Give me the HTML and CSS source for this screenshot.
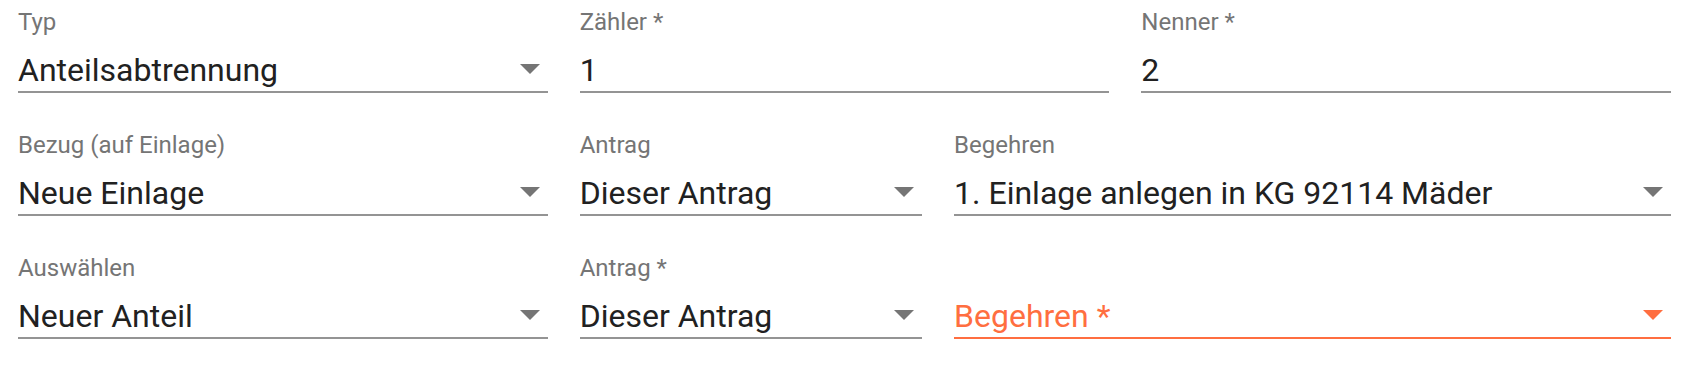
FILE: index.html
```html
<!DOCTYPE html>
<html lang="de">
<head>
<meta charset="utf-8">
<title>Formular</title>
<link rel="stylesheet" href="styles.css">
</head>
<body>
<form class="form">
  <div class="row row-even">
    <div class="field">
      <div class="label">Typ</div>
      <div class="control">
        <span class="value">Anteilsabtrennung</span>
        <svg class="arrow" viewBox="0 0 20 10"><polygon points="0,0 20,0 10,10"/></svg>
      </div>
    </div>
    <div class="field">
      <div class="label">Zähler *</div>
      <div class="control">
        <span class="value">1</span>
      </div>
    </div>
    <div class="field">
      <div class="label">Nenner *</div>
      <div class="control">
        <span class="value">2</span>
      </div>
    </div>
  </div>

  <div class="row row-split">
    <div class="field">
      <div class="label">Bezug (auf Einlage)</div>
      <div class="control">
        <span class="value">Neue Einlage</span>
        <svg class="arrow" viewBox="0 0 20 10"><polygon points="0,0 20,0 10,10"/></svg>
      </div>
    </div>
    <div class="field">
      <div class="label">Antrag</div>
      <div class="control">
        <span class="value">Dieser Antrag</span>
        <svg class="arrow" viewBox="0 0 20 10"><polygon points="0,0 20,0 10,10"/></svg>
      </div>
    </div>
    <div class="field">
      <div class="label">Begehren</div>
      <div class="control">
        <span class="value">1. Einlage anlegen in KG 92114 Mäder</span>
        <svg class="arrow" viewBox="0 0 20 10"><polygon points="0,0 20,0 10,10"/></svg>
      </div>
    </div>
  </div>

  <div class="row row-split">
    <div class="field">
      <div class="label">Auswählen</div>
      <div class="control">
        <span class="value">Neuer Anteil</span>
        <svg class="arrow" viewBox="0 0 20 10"><polygon points="0,0 20,0 10,10"/></svg>
      </div>
    </div>
    <div class="field">
      <div class="label">Antrag *</div>
      <div class="control">
        <span class="value">Dieser Antrag</span>
        <svg class="arrow" viewBox="0 0 20 10"><polygon points="0,0 20,0 10,10"/></svg>
      </div>
    </div>
    <div class="field field-error">
      <div class="label"></div>
      <div class="control">
        <span class="value placeholder">Begehren *</span>
        <svg class="arrow" viewBox="0 0 20 10"><polygon points="0,0 20,0 10,10"/></svg>
      </div>
    </div>
  </div>
</form>
</body>
</html>
```

FILE: styles.css
```css
html, body {
  margin: 0;
  padding: 0;
  background: #ffffff;
}

body {
  font-family: Roboto, "Liberation Sans", Arial, sans-serif;
}

.form {
  width: 1653px;
  margin: 0 0 0 18px;
  padding-top: 10px;
  display: flex;
  flex-direction: column;
  gap: 40px;
}

.row {
  display: grid;
  column-gap: 32px;
}

.row-even {
  grid-template-columns: repeat(3, 1fr);
}

.row-split {
  grid-template-columns: 529.67px 342.44px 1fr;
}

.field {
  display: flex;
  flex-direction: column;
  min-width: 0;
}

.label {
  height: 24px;
  font-size: 24px;
  line-height: 24px;
  color: #757575;
  white-space: nowrap;
}

.control {
  margin-top: 17px;
  display: flex;
  align-items: center;
  border-bottom: 2px solid #949494;
  padding-bottom: 2px;
}

.value {
  flex: 1;
  min-width: 0;
  font-size: 32px;
  line-height: 38px;
  color: #212121;
  white-space: nowrap;
}

.arrow {
  flex: none;
  width: 20px;
  height: 10px;
  margin-right: 8px;
  margin-bottom: 2px;
  fill: #757575;
}

.field-error .control {
  border-bottom-color: #ff6e40;
}

.field-error .placeholder {
  color: #ff6e40;
}

.field-error .arrow {
  fill: #ff6e40;
}
```
